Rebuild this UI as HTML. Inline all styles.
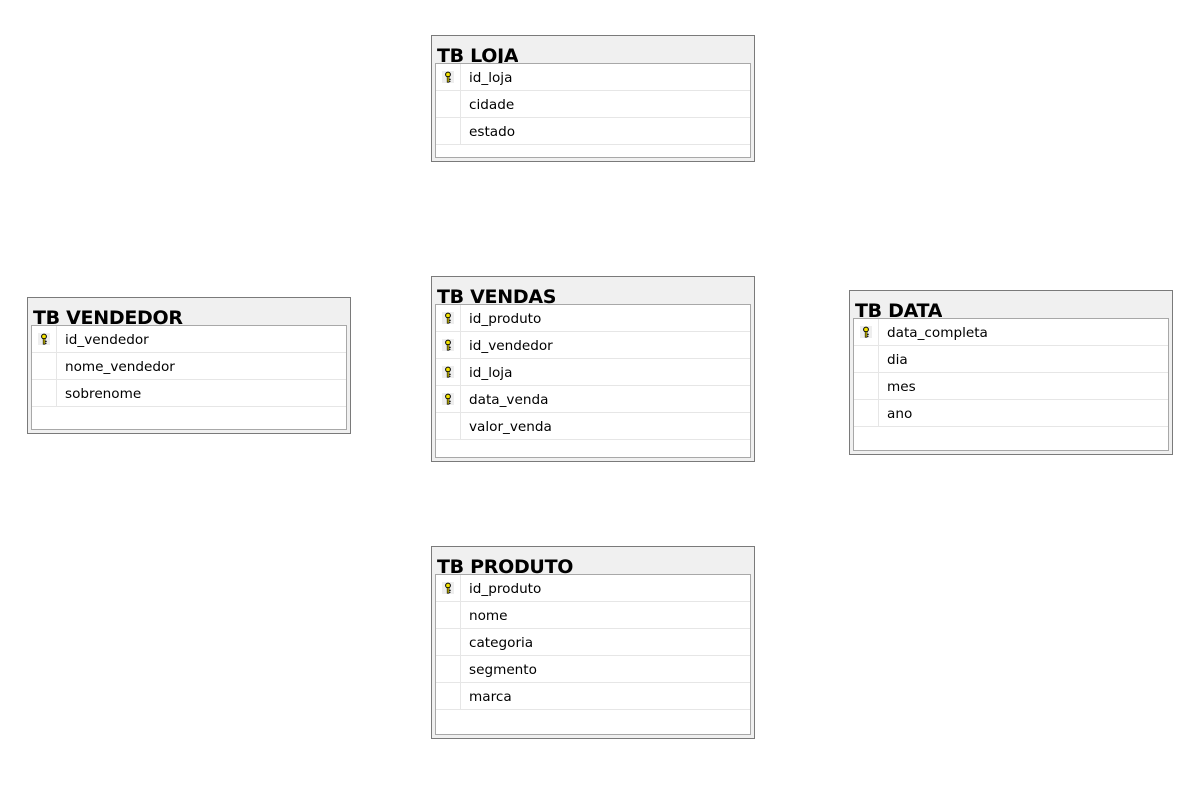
<!DOCTYPE html>
<html><head><meta charset="utf-8"><style>
*{margin:0;padding:0;box-sizing:border-box}
body{width:1191px;height:800px;background:#fff;position:relative;overflow:hidden;font-family:"DejaVu Sans","Liberation Sans",sans-serif}
.t{position:absolute;border:1px solid #7a7a7a;background:#f0f0f0}
.h{position:absolute;left:5px;top:0;height:28px;font:bold 19px "DejaVu Sans","Liberation Sans",sans-serif;letter-spacing:-0.3px;line-height:41px;overflow:hidden;color:#000;white-space:nowrap}
.in{position:absolute;left:3px;right:3px;top:27px;bottom:3px;background:#fff;border:1px solid #a8a8a8}
.r{height:27px;border-bottom:1px solid #e6e6e6;position:relative;font-size:13.6px;line-height:26px;color:#000}
.r .k{position:absolute;left:0;top:0;width:25px;height:26px;border-right:1px solid #e6e6e6}
.r span{position:absolute;left:33px;top:1px}
.r svg{position:absolute;left:6px;top:7px}
</style></head><body>
<svg width="0" height="0" style="position:absolute"><defs><g id="key"><rect x="0" y="0" width="12" height="12" fill="#eeeeee"/><circle cx="6" cy="3.5" r="2.4" fill="#f5e400" stroke="#000" stroke-width="1"/><rect x="5.2" y="5.6" width="1.8" height="5.6" fill="#f5e400" stroke="#000" stroke-width="0.7"/><rect x="7" y="7.8" width="1.8" height="1" fill="#000"/><rect x="7" y="9.8" width="1.5" height="1" fill="#000"/></g></defs></svg>

<div class="t" style="left:431px;top:35px;width:324px;height:127px"><div class="h">TB LOJA</div><div class="in">
<div class="r"><div class="k"></div><svg width="12" height="12"><use href="#key"/></svg><span>id_loja</span></div>
<div class="r"><div class="k"></div><span>cidade</span></div>
<div class="r"><div class="k"></div><span>estado</span></div>
</div></div>

<div class="t" style="left:431px;top:276px;width:324px;height:186px"><div class="h">TB VENDAS</div><div class="in">
<div class="r"><div class="k"></div><svg width="12" height="12"><use href="#key"/></svg><span>id_produto</span></div>
<div class="r"><div class="k"></div><svg width="12" height="12"><use href="#key"/></svg><span>id_vendedor</span></div>
<div class="r"><div class="k"></div><svg width="12" height="12"><use href="#key"/></svg><span>id_loja</span></div>
<div class="r"><div class="k"></div><svg width="12" height="12"><use href="#key"/></svg><span>data_venda</span></div>
<div class="r"><div class="k"></div><span>valor_venda</span></div>
</div></div>

<div class="t" style="left:27px;top:297px;width:324px;height:137px"><div class="h">TB VENDEDOR</div><div class="in">
<div class="r"><div class="k"></div><svg width="12" height="12"><use href="#key"/></svg><span>id_vendedor</span></div>
<div class="r"><div class="k"></div><span>nome_vendedor</span></div>
<div class="r"><div class="k"></div><span>sobrenome</span></div>
</div></div>

<div class="t" style="left:849px;top:290px;width:324px;height:165px"><div class="h">TB DATA</div><div class="in">
<div class="r"><div class="k"></div><svg width="12" height="12"><use href="#key"/></svg><span>data_completa</span></div>
<div class="r"><div class="k"></div><span>dia</span></div>
<div class="r"><div class="k"></div><span>mes</span></div>
<div class="r"><div class="k"></div><span>ano</span></div>
</div></div>

<div class="t" style="left:431px;top:546px;width:324px;height:193px"><div class="h">TB PRODUTO</div><div class="in">
<div class="r"><div class="k"></div><svg width="12" height="12"><use href="#key"/></svg><span>id_produto</span></div>
<div class="r"><div class="k"></div><span>nome</span></div>
<div class="r"><div class="k"></div><span>categoria</span></div>
<div class="r"><div class="k"></div><span>segmento</span></div>
<div class="r"><div class="k"></div><span>marca</span></div>
</div></div>
</body></html>
